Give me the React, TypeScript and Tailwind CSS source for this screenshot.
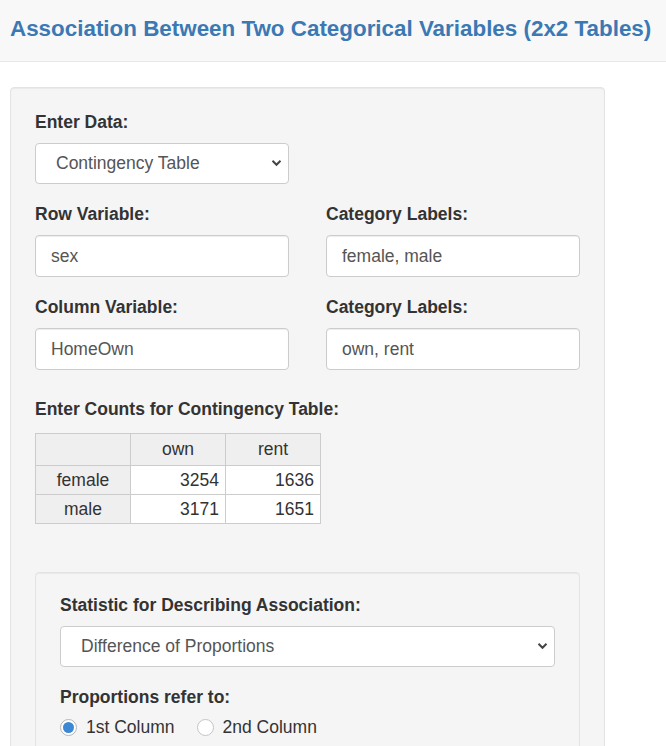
import { useState } from "react";

const font = { fontFamily: '"Liberation Sans", Arial, sans-serif' };

function Label({ children }: { children: React.ReactNode }) {
  return <label className="block text-[17.5px] font-bold text-[#333] leading-[25px] mb-[8px]">{children}</label>;
}

function TextInput({ value }: { value: string }) {
  return (
    <input
      type="text"
      defaultValue={value}
      className="block w-full h-[42px] px-[15px] text-[17.5px] text-[#555] bg-white border border-[#ccc] rounded-[4px] shadow-[inset_0_1px_1px_rgba(0,0,0,0.075)] outline-none"
    />
  );
}

function Select({ value, options }: { value: string; options: string[] }) {
  return (
    <div className="relative">
      <select
        defaultValue={value}
        className="block w-full h-[41px] pl-[20px] pr-8 text-[17.5px] text-[#555] bg-white border border-[#ccc] rounded-[4px] appearance-none outline-none"
      >
        {options.map((o) => (
          <option key={o}>{o}</option>
        ))}
      </select>
      <svg className="absolute right-[7px] top-[16px] pointer-events-none" width="11" height="8" viewBox="0 0 11 8">
        <path d="M1.5 1.8 L5.5 5.8 L9.5 1.8" fill="none" stroke="#444" strokeWidth="2" />
      </svg>
    </div>
  );
}

function Radio({ checked, label }: { checked: boolean; label: string }) {
  return (
    <label className="flex items-center gap-[9px] text-[17.5px] text-[#333] leading-[25px]">
      <span
        className={
          checked
            ? "w-[17px] h-[17px] rounded-full border border-[#b5b5b5] bg-white flex items-center justify-center"
            : "w-[17px] h-[17px] rounded-full border border-[#c4c4c4] bg-white"
        }
      >
        {checked && <span className="w-[11px] h-[11px] rounded-full bg-[#3d88d4]" />}
      </span>
      {label}
    </label>
  );
}

export default function App() {
  const [counts] = useState([
    ["female", "3254", "1636"],
    ["male", "3171", "1651"],
  ]);

  return (
    <div style={font} className="w-[666px] h-[746px] overflow-hidden bg-white text-[#333]">
      {/* title bar */}
      <div className="h-[62px] bg-[#f8f8f8] border-b border-[#e7e7e7] px-[10px] flex items-center">
        <h2 className="text-[22.4px] font-bold text-[#3b79b4] whitespace-nowrap pb-[4px]">
          Association Between Two Categorical Variables (2x2 Tables)
        </h2>
      </div>

      <div className="flex pt-[25px] pl-[10px]">
        {/* sidebar well */}
        <div className="w-[595px] shrink-0 bg-[#f5f5f5] border border-[#e3e3e3] rounded-[4px] shadow-[inset_0_1px_1px_rgba(0,0,0,0.05)] px-[24px] pt-[22px] h-[700px]">
          <Label>Enter Data:</Label>
          <div className="w-[254px]">
            <Select value="Contingency Table" options={["Contingency Table", "Individual Observations"]} />
          </div>

          <div className="grid grid-cols-[254px_254px] gap-x-[37px] mt-[18px]">
            <div>
              <Label>Row Variable:</Label>
              <TextInput value="sex" />
            </div>
            <div>
              <Label>Category Labels:</Label>
              <TextInput value="female, male" />
            </div>
            <div className="mt-[18px]">
              <Label>Column Variable:</Label>
              <TextInput value="HomeOwn" />
            </div>
            <div className="mt-[18px]">
              <Label>Category Labels:</Label>
              <TextInput value="own, rent" />
            </div>
          </div>

          <div className="mt-[27px]">
            <label className="block text-[17.5px] font-bold text-[#333] leading-[25px]">
              Enter Counts for Contingency Table:
            </label>
          </div>
          <table className="mt-[11px] border-collapse text-[17.5px] text-[#333]">
            <thead>
              <tr className="h-[32px]">
                <th className="w-[95px] bg-[#efefef] border border-[#ccc]" />
                <th className="w-[95px] bg-[#efefef] border border-[#ccc] font-normal text-center">own</th>
                <th className="w-[95px] bg-[#efefef] border border-[#ccc] font-normal text-center">rent</th>
              </tr>
            </thead>
            <tbody>
              {counts.map((r) => (
                <tr key={r[0]} className="h-[29px]">
                  <td className="bg-[#efefef] border border-[#ccc] text-center">{r[0]}</td>
                  <td className="bg-white border border-[#ccc] text-right pr-[6px]">{r[1]}</td>
                  <td className="bg-white border border-[#ccc] text-right pr-[6px]">{r[2]}</td>
                </tr>
              ))}
            </tbody>
          </table>

          {/* inner well */}
          <div className="mt-[48px] bg-[#f5f5f5] border border-[#e3e3e3] rounded-[4px] shadow-[inset_0_1px_1px_rgba(0,0,0,0.05)] px-[24px] pt-[20px] h-[200px]">
            <Label>Statistic for Describing Association:</Label>
            <Select
              value="Difference of Proportions"
              options={["Difference of Proportions", "Relative Risk", "Odds Ratio"]}
            />
            <div className="mt-[18px]">
              <label className="block text-[17.5px] font-bold text-[#333] leading-[25px] mb-[5px]">
                Proportions refer to:
              </label>
              <div className="flex gap-[22px]">
                <Radio checked label="1st Column" />
                <Radio checked={false} label="2nd Column" />
              </div>
            </div>
          </div>
        </div>

        {/* main panel start */}
        <div className="flex-1 flex items-end pl-[37px]">
          <div className="border-l border-[#ddd] h-[27px] pl-[17px] text-[17.5px] font-bold text-[#333] leading-[27px] overflow-hidden">
            F
          </div>
        </div>
      </div>
    </div>
  );
}
